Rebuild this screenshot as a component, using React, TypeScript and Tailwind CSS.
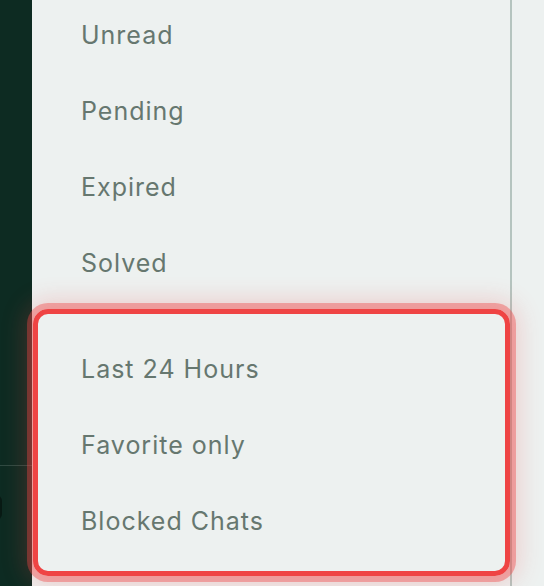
import React from "react";

const groupA = ["Unread", "Pending", "Expired", "Solved"];
const groupB = ["Last 24 Hours", "Favorite only", "Blocked Chats"];

export default function App() {
  return (
    <div
      className="relative flex h-[586px] w-[544px] overflow-hidden bg-[#edf1f0]"
      style={{ fontFamily: "Inter, 'Noto Sans', sans-serif" }}
    >
      <div className="relative h-full w-[32px] shrink-0 bg-[#0d2b22]">
        <div className="absolute left-0 top-[465px] h-px w-full bg-[#2f4a42]" />
        <div className="absolute left-[-10px] top-[495px] h-[25px] w-[12px] rounded-full bg-[#081a14]" />
      </div>
      <div className="relative h-full w-[480px] shrink-0 border-r-2 border-[#b5c4bf] pl-[49px]">
        <div className="mt-[-2px] flex flex-col">
          {groupA.map((t) => (
            <div key={t} className="flex h-[76px] items-center text-[25px] tracking-[1px] text-[#66776f]">
              {t}
            </div>
          ))}
        </div>
        <div className="mt-[30px] flex flex-col">
          {groupB.map((t) => (
            <div key={t} className="flex h-[76px] items-center text-[25px] tracking-[1px] text-[#66776f]">
              {t}
            </div>
          ))}
        </div>
      </div>
      <div className="flex-1" />
      <div className="pointer-events-none absolute left-[33px] top-[309px] h-[267px] w-[477px] rounded-[15px] border-[5px] border-[#ef4444] shadow-[0_0_0_6px_rgba(239,68,68,0.4),0_0_24px_8px_rgba(239,68,68,0.22)]" />
    </div>
  );
}
